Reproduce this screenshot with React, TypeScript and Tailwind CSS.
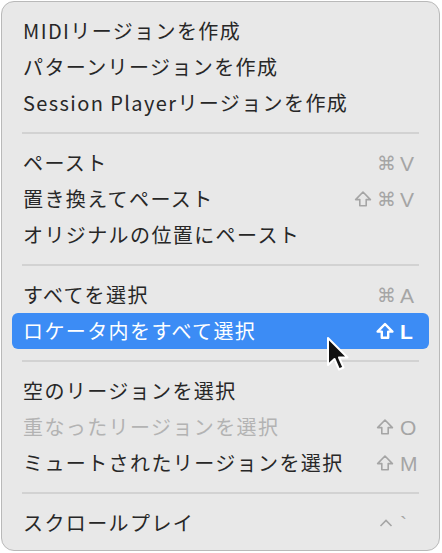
import { Fragment } from "react";

type Item = {
  label: string;
  mods?: string[];
  keyName?: string;
  disabled?: boolean;
  active?: boolean;
};

const groups: Item[][] = [
  [
    { label: "MIDIリージョンを作成" },
    { label: "パターンリージョンを作成" },
    { label: "Session Playerリージョンを作成" },
  ],
  [
    { label: "ペースト", mods: ["cmd"], keyName: "V" },
    { label: "置き換えてペースト", mods: ["shift", "cmd"], keyName: "V" },
    { label: "オリジナルの位置にペースト" },
  ],
  [
    { label: "すべてを選択", mods: ["cmd"], keyName: "A" },
    { label: "ロケータ内をすべて選択", mods: ["shift"], keyName: "L", active: true },
  ],
  [
    { label: "空のリージョンを選択" },
    { label: "重なったリージョンを選択", mods: ["shift"], keyName: "O", disabled: true },
    { label: "ミュートされたリージョンを選択", mods: ["shift"], keyName: "M" },
  ],
  [{ label: "スクロールプレイ", mods: ["ctrl"], keyName: "`" }],
];

function Mod({ name, active }: { name: string; active?: boolean }) {
  if (name === "shift") {
    return (
      <svg width="18" height="18" viewBox="0 0 18 18" className="shrink-0">
        <path
          d="M9 2 L16.4 9.6 L12.2 9.6 L12.2 15.8 L5.8 15.8 L5.8 9.6 L1.6 9.6 Z"
          fill="none"
          stroke="currentColor"
          strokeWidth={active ? 2.4 : 1.6}
          strokeLinejoin="round"
        />
      </svg>
    );
  }
  if (name === "ctrl") {
    return (
      <svg width="16" height="16" viewBox="0 0 16 16" className="shrink-0">
        <path d="M2.5 11 L8 5.5 L13.5 11" fill="none" stroke="currentColor" strokeWidth="1.6" />
      </svg>
    );
  }
  return (
    <span className="w-[17px] text-center" style={{ fontFamily: '"DejaVu Sans", sans-serif' }}>
      ⌘
    </span>
  );
}

function Row({ item }: { item: Item }) {
  const textColor = item.active
    ? "text-white"
    : item.disabled
      ? "text-[#b3b3b3]"
      : "text-[#272727]";
  const keyColor = item.active ? "text-white" : "text-[#a5a5a5]";
  return (
    <div
      className={`h-[36px] flex items-center justify-between px-[11px] rounded-[6px] ${
        item.active ? "bg-[#3c8cf5]" : ""
      }`}
    >
      <span className={`text-[20px] tracking-[1.4px] leading-none ${textColor}`}>{item.label}</span>
      {item.keyName && (
        <span className={`flex items-center gap-[5px] text-[19px] leading-none ${keyColor}`}>
          {item.mods?.map((m) => <Mod key={m} name={m} active={item.active} />)}
          <span
            className={`w-[18px] ml-[1px] text-[21px] ${item.active ? "font-bold" : ""}`}
            style={{ fontFamily: '"Liberation Sans", sans-serif' }}
          >
            {item.keyName}
          </span>
        </span>
      )}
    </div>
  );
}

export default function App() {
  return (
    <div
      className="w-[442px] h-[553px] bg-white relative"
      style={{ fontFamily: '"Noto Sans CJK JP", "Noto Sans", sans-serif' }}
    >
      <div className="absolute left-[1px] top-[1px] w-[439px] h-[550px] rounded-[13px] border border-[#b9b9b9] bg-[#e8e8e8] px-[10px] pt-[11px]">
        {groups.map((g, gi) => (
          <Fragment key={gi}>
            {gi > 0 && (
              <div className="h-[24px] flex items-center px-[10px]">
                <div className="h-[2px] w-full bg-[#d2d2d2]" />
              </div>
            )}
            {g.map((item) => (
              <Row key={item.label} item={item} />
            ))}
          </Fragment>
        ))}
      </div>

      {/* mouse pointer */}
      <svg
        className="absolute left-[325px] top-[336px]"
        width="26"
        height="38"
        viewBox="0 0 26 38"
      >
        <path
          d="M3 2 L3 29 L9.5 23 L14 33.5 L18.5 31.5 L14 21.5 L22.5 21.5 Z"
          fill="#111"
          stroke="#fff"
          strokeWidth="2"
          strokeLinejoin="round"
        />
      </svg>
    </div>
  );
}
